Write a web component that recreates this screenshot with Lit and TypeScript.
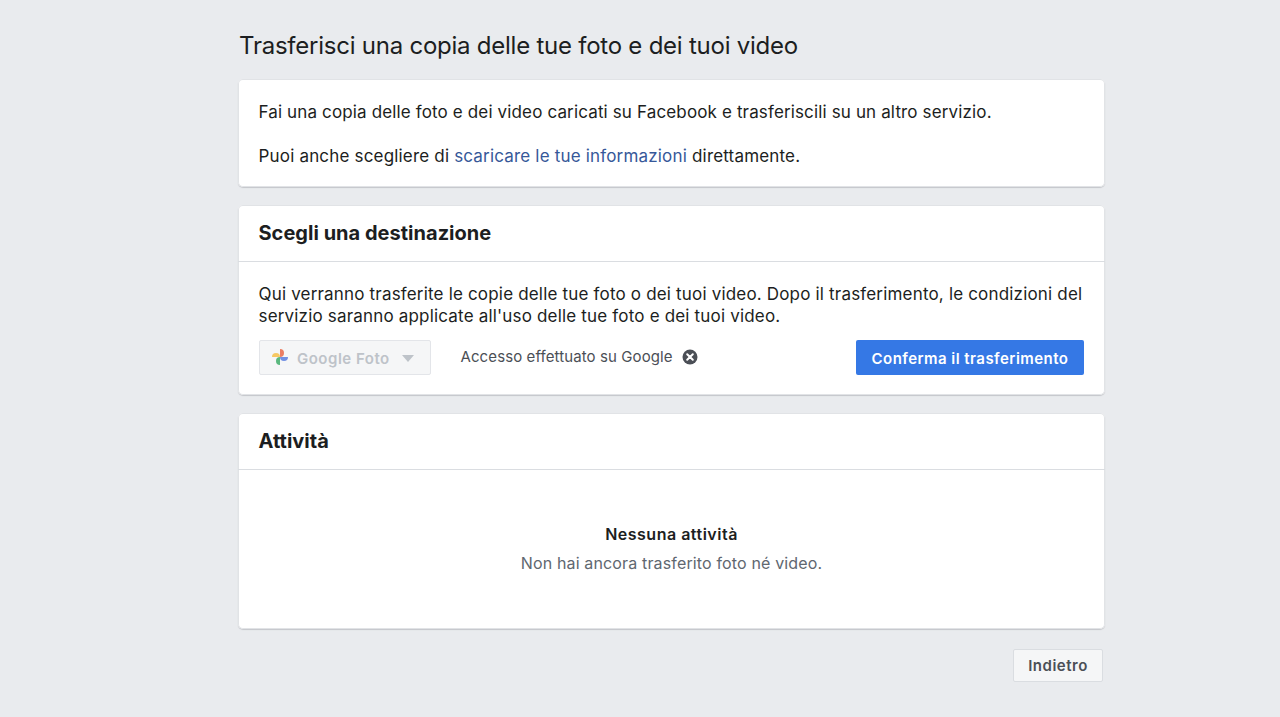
import { LitElement, html, css, svg } from "lit";
import { customElement } from "lit/decorators.js";

@customElement("app-root")
export class AppRoot extends LitElement {
  static styles = css`
    :host {
      display: block;
      width: 1280px;
      height: 717px;
      overflow: hidden;
      background: #e9ebee;
      font-family: Inter, "Liberation Sans", sans-serif;
      color: #1c1e21;
    }
    .page {
      width: 867px;
      margin-left: 238px;
      display: flex;
      flex-direction: column;
    }
    h1 {
      margin: 0;
      height: 79px;
      box-sizing: border-box;
      padding-top: 30px;
      padding-left: 1px;
      font-size: 24px;
      line-height: 32px;
      font-weight: 400;
      letter-spacing: -0.24px;
    }
    .card {
      background: #fff;
      border-radius: 5px;
      box-shadow: 0 0 0 1px #e1e3e6 inset, 0 1px 1px #c4c6ca;
      margin-bottom: 18px;
      box-sizing: border-box;
    }
    .intro {
      height: 108px;
      padding: 22px 21px 0 20.5px;
      font-size: 17px;
      line-height: 22px;
      letter-spacing: 0.14px;
    }
    .intro p { margin: 0 0 22px; }
    .intro p.second { letter-spacing: 0.18px; }
    a { color: #365899; text-decoration: none; }
    .head {
      height: 57px;
      box-sizing: border-box;
      padding: 16px 21px 0 20.5px;
      border-bottom: 1px solid #dadde1;
      font-size: 20px;
      line-height: 24px;
      font-weight: 700;
      letter-spacing: 0.02px;
    }
    .dest { height: 190px; }
    .dest .body {
      padding: 21px 21px 0 20.5px;
      font-size: 17px;
      line-height: 22px;
      letter-spacing: 0.18px;
    }
    .dest p { margin: 0; white-space: nowrap; }
    .row {
      display: flex;
      align-items: center;
      margin-top: 12px;
      height: 36px;
    }
    .select {
      width: 172px;
      height: 35px;
      box-sizing: border-box;
      border: 1px solid #e3e5e9;
      border-radius: 2px;
      background: #f5f6f7;
      display: flex;
      align-items: center;
      padding-left: 11.5px;
      color: #bec3c9;
      font-size: 15px;
      font-weight: 600;
      letter-spacing: 0.5px;
    }
    .select svg { flex: none; opacity: 0.85; }
    .select .name { margin-left: 8px; padding-top: 4px; }
    .caret {
      margin-left: 12px;
      width: 0;
      height: 0;
      border-left: 6.5px solid transparent;
      border-right: 6.5px solid transparent;
      border-top: 7px solid #bec3c9;
      margin-top: 2px;
    }
    .status {
      margin-left: 30px;
      font-size: 15px;
      color: #4b4f56;
      display: flex;
      align-items: center;
      letter-spacing: 0.1px;
    }
    .status svg { margin-left: 9px; }
    .confirm {
      margin-left: auto;
      width: 228px;
      height: 35px;
      border: 0;
      border-radius: 2px;
      background: #3578e5;
      color: #fff;
      font: 600 15px Inter, "Liberation Sans", sans-serif;
      letter-spacing: 0.45px;
      padding: 3px 0 0;
    }
    .activity { height: 216px; }
    .empty {
      text-align: center;
      padding-top: 53px;
    }
    .empty strong {
      display: block;
      font-size: 16px;
      line-height: 22px;
      font-weight: 600;
      letter-spacing: 0.5px;
    }
    .empty span {
      display: block;
      margin-top: 7px;
      font-size: 16px;
      line-height: 22px;
      color: #606770;
      letter-spacing: 0.15px;
    }
    .foot {
      display: flex;
      justify-content: flex-end;
      padding-right: 2px;
      margin-top: 2px;
    }
    .back {
      width: 90px;
      height: 33px;
      box-sizing: border-box;
      border: 1px solid #dadde1;
      border-radius: 2px;
      background: #f5f6f7;
      color: #4b4f56;
      font: 600 15px Inter, "Liberation Sans", sans-serif;
      letter-spacing: 0.5px;
      padding: 0;
    }
  `;

  private pinwheel() {
    return html`<svg width="18" height="18" viewBox="0 0 18 18" aria-hidden="true">
      ${svg`
        <path d="M9 9 V1 A4 4 0 0 1 9 9 Z" fill="#ea6a4a"/>
        <path d="M9 9 H17 A4 4 0 0 1 9 9 Z" fill="#5b7fe0"/>
        <path d="M9 9 V17 A4 4 0 0 1 9 9 Z" fill="#3fae6a"/>
        <path d="M9 9 H1 A4 4 0 0 1 9 9 Z" fill="#f7c04a"/>
      `}
    </svg>`;
  }

  render() {
    return html`
      <div class="page">
        <h1>Trasferisci una copia delle tue foto e dei tuoi video</h1>

        <section class="card intro">
          <p>Fai una copia delle foto e dei video caricati su Facebook e trasferiscili su un altro servizio.</p>
          <p class="second">Puoi anche scegliere di <a href="#">scaricare le tue informazioni</a> direttamente.</p>
        </section>

        <section class="card dest">
          <div class="head">Scegli una destinazione</div>
          <div class="body">
            <p>Qui verranno trasferite le copie delle tue foto o dei tuoi video. Dopo il trasferimento, le condizioni del<br />servizio saranno applicate all'uso delle tue foto e dei tuoi video.</p>
            <div class="row">
              <div class="select">
                ${this.pinwheel()}
                <span class="name">Google Foto</span>
                <span class="caret"></span>
              </div>
              <div class="status">
                Accesso effettuato su Google
                <svg width="16" height="16" viewBox="0 0 16 16" aria-hidden="true">
                  <circle cx="8" cy="8" r="7.5" fill="#4b4f56"></circle>
                  <path d="M5.2 5.2 L10.8 10.8 M10.8 5.2 L5.2 10.8" stroke="#fff" stroke-width="2" stroke-linecap="round"></path>
                </svg>
              </div>
              <button class="confirm">Conferma il trasferimento</button>
            </div>
          </div>
        </section>

        <section class="card activity">
          <div class="head">Attività</div>
          <div class="empty">
            <strong>Nessuna attività</strong>
            <span>Non hai ancora trasferito foto né video.</span>
          </div>
        </section>

        <div class="foot"><button class="back">Indietro</button></div>
      </div>
    `;
  }
}
